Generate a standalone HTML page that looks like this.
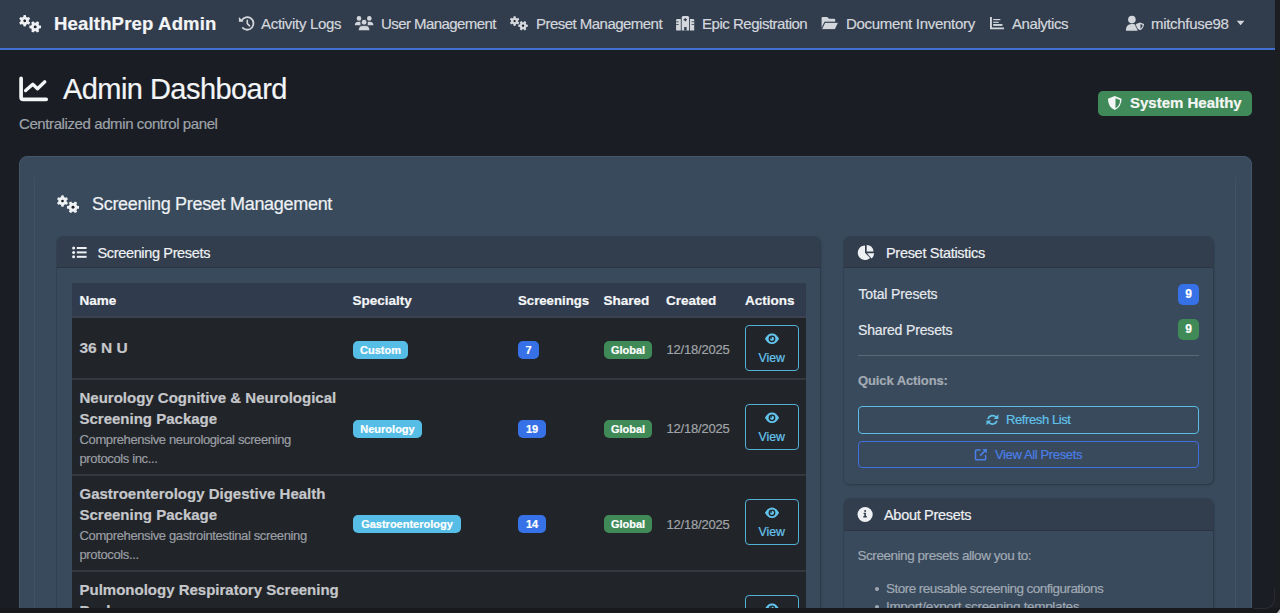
<!DOCTYPE html>
<html><head><meta charset="utf-8">
<style>
*{box-sizing:border-box;margin:0;padding:0}
html,body{width:1280px;height:613px;overflow:hidden;background:#1a1d24;font-family:"Liberation Sans",sans-serif;color:#e9ecef}
.a{position:absolute}
.t{position:absolute;white-space:nowrap;line-height:1;-webkit-text-stroke:0.2px currentColor}
.b{font-weight:700}
svg{position:absolute;display:block}
#nav{left:0;top:0;width:1275px;height:48px;background:#313c4d}
#navline{left:0;top:47.7px;width:1275px;height:2px;background:#416fd2}
#sb{left:1275px;top:0;width:5px;height:613px;background:#1c1d21}
.nl{font-size:15px;color:#d3d7dc;letter-spacing:-0.3px}
#outer{left:19px;top:156px;width:1233px;height:470px;background:#384a5c;border-radius:8px;border:1px solid #45566a}
#inner{left:34px;top:170px;width:1202px;height:460px;border-left:1.5px solid rgba(255,255,255,0.05);border-right:1.5px solid rgba(255,255,255,0.05);-webkit-mask-image:linear-gradient(to bottom,transparent 0,#000 14px)}
.card{position:absolute;background:#384a5c;border-radius:6px;box-shadow:0 0 0 1px rgba(20,25,32,0.14),1px 1px 3px rgba(0,0,0,0.18)}
.ch{position:absolute;left:0;top:0;right:0;height:31px;background:#323d4d;border-radius:6px 6px 0 0;border-bottom:1px solid #2b3441}
.bd{position:absolute;height:18px;border-radius:5px;font-weight:700;font-size:11px;color:#fff;text-align:center;line-height:18px;-webkit-text-stroke:0.2px #fff}
.cy{background:#56bde6}
.bl{background:#3771e8}
.gr{background:#3f8a57}
.row{position:absolute;left:72px;width:734px;background:#212428;border-bottom:2px solid #35373e}
.vb{position:absolute;left:745px;width:54px;height:46px;border:1px solid #52afd6;border-radius:4px}
.nm{font-size:15px;color:#c5c7cb;font-weight:700}
.ds{font-size:13px;color:#9a9ea4;letter-spacing:-0.37px}
.dt{font-size:13px;color:#a0a4a9;letter-spacing:-0.2px}
.vt{font-size:12.3px;color:#66c5ee}
</style></head><body>
<div id="nav" class="a"></div>
<div id="navline" class="a"></div>

<!-- brand -->

<div class="t b" style="left:54px;top:14.5px;font-size:18.5px;letter-spacing:0.18px;color:#f2f4f6">HealthPrep Admin</div>

<div class="t nl" style="left:261px;top:16px">Activity Logs</div>
<div class="t nl" style="left:381px;top:16px;letter-spacing:-0.57px">User Management</div>
<div class="t nl" style="left:536px;top:16px;letter-spacing:-0.53px">Preset Management</div>
<div class="t nl" style="left:702px;top:16px;letter-spacing:-0.48px">Epic Registration</div>
<div class="t nl" style="left:846px;top:16px">Document Inventory</div>
<div class="t nl" style="left:1012px;top:16px;letter-spacing:-0.43px">Analytics</div>
<div class="t nl" style="left:1151px;top:16px">mitchfuse98</div>

<div id="sb" class="a"></div>

<!-- title -->
<div class="t" style="left:63px;top:75px;font-size:29px;letter-spacing:-0.55px;color:#f3f5f7">Admin Dashboard</div>
<div class="t" style="left:19px;top:116px;font-size:15px;letter-spacing:-0.4px;color:#9ea3a9">Centralized admin control panel</div>

<div class="a" style="left:1098px;top:91px;width:154px;height:25px;background:#3f8a58;border-radius:5px"></div>
<div class="t b" style="left:1130px;top:95px;font-size:15px;color:#f4f6f5">System Healthy</div>

<div id="outer" class="a"></div>
<div id="inner" class="a"></div>

<div class="t" style="left:92px;top:195px;font-size:18px;letter-spacing:-0.3px;color:#eef1f4">Screening Preset Management</div>

<!-- left card -->
<div class="card" style="left:57px;top:237px;width:763px;height:400px">
  <div class="ch"></div>
</div>
<div class="t" style="left:97.5px;top:245.7px;font-size:14.5px;letter-spacing:-0.35px;color:#eef1f4">Screening Presets</div>

<div class="a" style="left:72px;top:283px;width:734px;height:35px;background:#303c4d;border-bottom:2px solid #3c4250"></div>
<div class="t b" style="left:79.5px;top:294px;font-size:13.5px;color:#f4f6f8">Name</div>
<div class="t b" style="left:352.5px;top:294px;font-size:13.5px;color:#f4f6f8">Specialty</div>
<div class="t b" style="left:518px;top:294px;font-size:13.2px;color:#f4f6f8">Screenings</div>
<div class="t b" style="left:603.5px;top:294px;font-size:13.5px;color:#f4f6f8">Shared</div>
<div class="t b" style="left:666px;top:294px;font-size:13.5px;color:#f4f6f8">Created</div>
<div class="t b" style="left:745px;top:294px;font-size:13.5px;color:#f4f6f8">Actions</div>

<div class="row" style="top:318px;height:62px"></div>
<div class="row" style="top:380px;height:96px"></div>
<div class="row" style="top:476px;height:96px"></div>
<div class="row" style="top:572px;height:96px"></div>

<!-- row1 -->
<div class="t nm" style="left:79.5px;top:340px;font-size:15.5px">36 N U</div>
<div class="bd cy" style="left:353px;top:341px;width:55px">Custom</div>
<div class="bd bl" style="left:518px;top:341px;width:21px">7</div>
<div class="bd gr" style="left:604px;top:341px;width:48px">Global</div>
<div class="t dt" style="left:666.5px;top:342.5px">12/18/2025</div>
<div class="vb" style="top:325px"></div>
<div class="t vt" style="left:758.5px;top:352px">View</div>

<!-- row2 -->
<div class="t nm" style="left:79.5px;top:390px">Neurology Cognitive &amp; Neurological</div>
<div class="t nm" style="left:79.5px;top:411px">Screening Package</div>
<div class="t ds" style="left:79.5px;top:433px">Comprehensive neurological screening</div>
<div class="t ds" style="left:79.5px;top:452px">protocols inc...</div>
<div class="bd cy" style="left:353px;top:419.5px;width:69px">Neurology</div>
<div class="bd bl" style="left:518px;top:419.5px;width:28px">19</div>
<div class="bd gr" style="left:604px;top:419.5px;width:48px">Global</div>
<div class="t dt" style="left:666.5px;top:422px">12/18/2025</div>
<div class="vb" style="top:404px"></div>
<div class="t vt" style="left:758.5px;top:431px">View</div>

<!-- row3 -->
<div class="t nm" style="left:79.5px;top:486px">Gastroenterology Digestive Health</div>
<div class="t nm" style="left:79.5px;top:507px">Screening Package</div>
<div class="t ds" style="left:79.5px;top:529px">Comprehensive gastrointestinal screening</div>
<div class="t ds" style="left:79.5px;top:548px">protocols...</div>
<div class="bd cy" style="left:353px;top:515px;width:108px">Gastroenterology</div>
<div class="bd bl" style="left:518px;top:515px;width:28px">14</div>
<div class="bd gr" style="left:604px;top:515px;width:48px">Global</div>
<div class="t dt" style="left:666.5px;top:518px">12/18/2025</div>
<div class="vb" style="top:499px"></div>
<div class="t vt" style="left:758.5px;top:526px">View</div>

<!-- row4 -->
<div class="t nm" style="left:79.5px;top:582px">Pulmonology Respiratory Screening</div>
<div class="t nm" style="left:79.5px;top:603px">Package</div>
<div class="vb" style="top:595px"></div>

<!-- right card -->
<div class="card" style="left:844px;top:237px;width:369px;height:247px"><div class="ch"></div></div>
<div class="t" style="left:886px;top:246px;font-size:14.5px;letter-spacing:-0.3px;color:#eef1f4">Preset Statistics</div>
<div class="t" style="left:858.5px;top:286.5px;font-size:14px;letter-spacing:-0.15px;color:#e6e9ed">Total Presets</div>
<div class="t" style="left:858px;top:322.5px;font-size:14px;letter-spacing:-0.15px;color:#e6e9ed">Shared Presets</div>
<div class="bd bl" style="left:1178px;top:283.5px;width:21px;height:21px;line-height:21px;border-radius:5px;font-size:12px">9</div>
<div class="bd gr" style="left:1178px;top:319px;width:21px;height:21px;line-height:21px;border-radius:5px;font-size:12px">9</div>
<div class="a" style="left:858px;top:355px;width:341px;height:1px;background:#5b6878"></div>
<div class="t b" style="left:858px;top:374px;font-size:13px;letter-spacing:-0.1px;color:#a3abb4">Quick Actions:</div>
<div class="a" style="left:858px;top:406px;width:341px;height:28px;border:1px solid #5bbde6;border-radius:4px"></div>
<div class="t" style="left:1006px;top:413px;font-size:13px;letter-spacing:-0.4px;color:#62c2ea">Refresh List</div>
<div class="a" style="left:858px;top:441px;width:341px;height:27px;border:1.5px solid #416fdc;border-radius:4px"></div>
<div class="t" style="left:995px;top:448px;font-size:13px;letter-spacing:-0.37px;color:#4b7ee6">View All Presets</div>

<!-- about card -->
<div class="card" style="left:844px;top:499px;width:369px;height:200px"><div class="ch" style="height:32px"></div></div>
<div class="t" style="left:884px;top:508px;font-size:14.5px;letter-spacing:-0.3px;color:#eef1f4">About Presets</div>
<div class="t" style="left:857.5px;top:548.5px;font-size:13.5px;letter-spacing:-0.45px;color:#a0a9b3">Screening presets allow you to:</div>
<div class="a" style="left:875px;top:587px;width:4px;height:4px;border-radius:50%;background:#a0a9b3"></div>
<div class="t" style="left:886px;top:582px;font-size:13.5px;letter-spacing:-0.53px;color:#a0a9b3">Store reusable screening configurations</div>
<div class="a" style="left:875px;top:605px;width:4px;height:4px;border-radius:50%;background:#a0a9b3"></div>
<div class="t" style="left:886px;top:600px;font-size:13.5px;letter-spacing:-0.33px;color:#a0a9b3">Import/export screening templates</div>

<!--ICONS--><svg class="ov" width="1280" height="613" viewBox="0 0 1280 613" style="position:absolute;left:0;top:0">
<path fill="#eef0f3" d="M23.27,16.89 L23.46,15.24 A5.70,5.70 0 0,1 25.94,15.24 L26.13,16.89 A4.16,4.16 0 0,1 27.37,17.61 L28.90,16.94 A5.70,5.70 0 0,1 30.14,19.10 L28.80,20.08 A4.16,4.16 0 0,1 28.80,21.52 L30.14,22.50 A5.70,5.70 0 0,1 28.90,24.66 L27.37,23.99 A4.16,4.16 0 0,1 26.13,24.71 L25.94,26.36 A5.70,5.70 0 0,1 23.46,26.36 L23.27,24.71 A4.16,4.16 0 0,1 22.03,23.99 L20.50,24.66 A5.70,5.70 0 0,1 19.26,22.50 L20.60,21.52 A4.16,4.16 0 0,1 20.60,20.08 L19.26,19.10 A5.70,5.70 0 0,1 20.50,16.94 L22.03,17.61 A4.16,4.16 0 0,1 23.27,16.89Z"/><circle cx="24.7" cy="20.8" r="1.37" fill="#1c1f26"/><path fill="#eef0f3" d="M35.94,22.66 L36.96,21.27 A5.90,5.90 0 0,1 39.19,22.56 L38.50,24.13 A4.31,4.31 0 0,1 39.25,25.42 L40.96,25.61 A5.90,5.90 0 0,1 40.96,28.19 L39.25,28.38 A4.31,4.31 0 0,1 38.50,29.67 L39.19,31.24 A5.90,5.90 0 0,1 36.96,32.53 L35.94,31.14 A4.31,4.31 0 0,1 34.46,31.14 L33.44,32.53 A5.90,5.90 0 0,1 31.21,31.24 L31.90,29.67 A4.31,4.31 0 0,1 31.15,28.38 L29.44,28.19 A5.90,5.90 0 0,1 29.44,25.61 L31.15,25.42 A4.31,4.31 0 0,1 31.90,24.13 L31.21,22.56 A5.90,5.90 0 0,1 33.44,21.27 L34.46,22.66 A4.31,4.31 0 0,1 35.94,22.66Z"/><circle cx="35.2" cy="26.9" r="1.42" fill="#1c1f26"/>
<path fill="#d3d7dc" d="M513.39,17.77 L513.54,16.37 A4.85,4.85 0 0,1 515.66,16.37 L515.81,17.77 A3.54,3.54 0 0,1 516.87,18.39 L518.17,17.82 A4.85,4.85 0 0,1 519.23,19.65 L518.09,20.49 A3.54,3.54 0 0,1 518.09,21.71 L519.23,22.55 A4.85,4.85 0 0,1 518.17,24.38 L516.87,23.81 A3.54,3.54 0 0,1 515.81,24.43 L515.66,25.83 A4.85,4.85 0 0,1 513.54,25.83 L513.39,24.43 A3.54,3.54 0 0,1 512.33,23.81 L511.03,24.38 A4.85,4.85 0 0,1 509.97,22.55 L511.11,21.71 A3.54,3.54 0 0,1 511.11,20.49 L509.97,19.65 A4.85,4.85 0 0,1 511.03,17.82 L512.33,18.39 A3.54,3.54 0 0,1 513.39,17.77Z"/><circle cx="514.6" cy="21.1" r="1.16" fill="#1c1f26"/><path fill="#d3d7dc" d="M523.66,22.26 L524.50,21.12 A4.85,4.85 0 0,1 526.33,22.18 L525.76,23.48 A3.54,3.54 0 0,1 526.38,24.54 L527.78,24.69 A4.85,4.85 0 0,1 527.78,26.81 L526.38,26.96 A3.54,3.54 0 0,1 525.76,28.02 L526.33,29.32 A4.85,4.85 0 0,1 524.50,30.38 L523.66,29.24 A3.54,3.54 0 0,1 522.44,29.24 L521.60,30.38 A4.85,4.85 0 0,1 519.77,29.32 L520.34,28.02 A3.54,3.54 0 0,1 519.72,26.96 L518.32,26.81 A4.85,4.85 0 0,1 518.32,24.69 L519.72,24.54 A3.54,3.54 0 0,1 520.34,23.48 L519.77,22.18 A4.85,4.85 0 0,1 521.60,21.12 L522.44,22.26 A3.54,3.54 0 0,1 523.66,22.26Z"/><circle cx="523.05" cy="25.75" r="1.16" fill="#1c1f26"/>
<path fill="#eef1f4" d="M61.07,197.09 L61.26,195.44 A5.70,5.70 0 0,1 63.74,195.44 L63.93,197.09 A4.16,4.16 0 0,1 65.17,197.81 L66.70,197.14 A5.70,5.70 0 0,1 67.94,199.30 L66.60,200.28 A4.16,4.16 0 0,1 66.60,201.72 L67.94,202.70 A5.70,5.70 0 0,1 66.70,204.86 L65.17,204.19 A4.16,4.16 0 0,1 63.93,204.91 L63.74,206.56 A5.70,5.70 0 0,1 61.26,206.56 L61.07,204.91 A4.16,4.16 0 0,1 59.83,204.19 L58.30,204.86 A5.70,5.70 0 0,1 57.06,202.70 L58.40,201.72 A4.16,4.16 0 0,1 58.40,200.28 L57.06,199.30 A5.70,5.70 0 0,1 58.30,197.14 L59.83,197.81 A4.16,4.16 0 0,1 61.07,197.09Z"/><circle cx="62.5" cy="201" r="1.37" fill="#1c1f26"/><path fill="#eef1f4" d="M73.77,202.91 L74.82,201.48 A6.10,6.10 0 0,1 77.13,202.81 L76.41,204.44 A4.45,4.45 0 0,1 77.18,205.77 L78.95,205.97 A6.10,6.10 0 0,1 78.95,208.63 L77.18,208.83 A4.45,4.45 0 0,1 76.41,210.16 L77.13,211.79 A6.10,6.10 0 0,1 74.82,213.12 L73.77,211.69 A4.45,4.45 0 0,1 72.23,211.69 L71.18,213.12 A6.10,6.10 0 0,1 68.87,211.79 L69.59,210.16 A4.45,4.45 0 0,1 68.82,208.83 L67.05,208.63 A6.10,6.10 0 0,1 67.05,205.97 L68.82,205.77 A4.45,4.45 0 0,1 69.59,204.44 L68.87,202.81 A6.10,6.10 0 0,1 71.18,201.48 L72.23,202.91 A4.45,4.45 0 0,1 73.77,202.91Z"/><circle cx="73" cy="207.3" r="1.46" fill="#1c1f26"/>
<path fill="#62c4ec" fill-rule="evenodd" d="M764.9,338.8 Q768.095,333.235 772,333.5 Q775.905,333.235 779.1,338.8 Q775.905,344.365 772,344.1 Q768.095,344.365 764.9,338.8Z M775.4,338.8 A3.4,3.4 0 1,0 768.6,338.8 A3.4,3.4 0 1,0 775.4,338.8Z"/><circle cx="772" cy="338.8" r="2.1" fill="#62c4ec"/><circle cx="771.1" cy="337.90000000000003" r="0.9" fill="#212428"/>
<path fill="#62c4ec" fill-rule="evenodd" d="M764.9,417.8 Q768.095,412.235 772,412.5 Q775.905,412.235 779.1,417.8 Q775.905,423.365 772,423.1 Q768.095,423.365 764.9,417.8Z M775.4,417.8 A3.4,3.4 0 1,0 768.6,417.8 A3.4,3.4 0 1,0 775.4,417.8Z"/><circle cx="772" cy="417.8" r="2.1" fill="#62c4ec"/><circle cx="771.1" cy="416.90000000000003" r="0.9" fill="#212428"/>
<path fill="#62c4ec" fill-rule="evenodd" d="M764.9,512.8 Q768.095,507.23499999999996 772,507.49999999999994 Q775.905,507.23499999999996 779.1,512.8 Q775.905,518.365 772,518.0999999999999 Q768.095,518.365 764.9,512.8Z M775.4,512.8 A3.4,3.4 0 1,0 768.6,512.8 A3.4,3.4 0 1,0 775.4,512.8Z"/><circle cx="772" cy="512.8" r="2.1" fill="#62c4ec"/><circle cx="771.1" cy="511.9" r="0.9" fill="#212428"/>
<path fill="#62c4ec" fill-rule="evenodd" d="M764.9,608.8 Q768.095,603.2349999999999 772,603.5 Q775.905,603.2349999999999 779.1,608.8 Q775.905,614.365 772,614.0999999999999 Q768.095,614.365 764.9,608.8Z M775.4,608.8 A3.4,3.4 0 1,0 768.6,608.8 A3.4,3.4 0 1,0 775.4,608.8Z"/><circle cx="772" cy="608.8" r="2.1" fill="#62c4ec"/><circle cx="771.1" cy="607.9" r="0.9" fill="#212428"/>


<!-- history -->
<path d="M241.7,20.35 A6.3,6.3 0 1,1 242.75,27.95" fill="none" stroke="#d3d7dc" stroke-width="1.8" stroke-linecap="round"/>
<path d="M238.9,16.9 L238.9,21.7 L243.7,21.7 Z" fill="#d3d7dc"/>
<path d="M247.3,20.2 V23.6 L249.6,25.8" fill="none" stroke="#d3d7dc" stroke-width="1.6" stroke-linecap="round"/>
<!-- users -->
<circle cx="359" cy="18.4" r="2.3" fill="#d3d7dc"/>
<circle cx="369.3" cy="18.4" r="2.3" fill="#d3d7dc"/>
<path d="M354.8,25.2 Q354.8,21.7 358.3,21.7 H360.5 V25.2 Z" fill="#d3d7dc"/>
<path d="M373.4,25.2 Q373.4,21.7 369.9,21.7 H367.7 V25.2 Z" fill="#d3d7dc"/>
<circle cx="364.1" cy="22.2" r="2.9" fill="#d3d7dc" stroke="#313c4d" stroke-width="0.9"/>
<path d="M358.4,30.7 Q358.4,25.6 362.5,25.6 H365.7 Q369.8,25.6 369.8,30.7 Z" fill="#d3d7dc" stroke="#313c4d" stroke-width="0.8"/>
<!-- hospital -->
<path d="M676.1,30.6 V20 Q676.1,19 677.1,19 H680.8 V30.6 Z" fill="#d3d7dc"/>
<path d="M681.7,30.6 V17.4 Q681.7,15.9 683.2,15.9 H687.6 Q689.1,15.9 689.1,17.4 V30.6 Z" fill="#d3d7dc"/>
<path d="M690,30.6 V19 H693.2 Q694.2,19 694.2,20 V30.6 Z" fill="#d3d7dc"/>
<rect x="676.1" y="21.4" width="2.6" height="0.8" fill="#313c4d"/>
<rect x="676.1" y="24" width="2.6" height="0.8" fill="#313c4d"/>
<rect x="691.6" y="21.4" width="2.6" height="0.8" fill="#313c4d"/>
<rect x="691.6" y="24" width="2.6" height="0.8" fill="#313c4d"/>
<path d="M684.6,18.2 H686 V19.1 H686.9 V20.3 H686 V21.2 H684.6 V20.3 H683.7 V19.1 H684.6 Z" fill="#313c4d"/>
<rect x="684.2" y="27" width="2.4" height="3.6" fill="#313c4d"/>
<!-- folder open -->
<path d="M821.6,27.8 V18 Q821.6,16.9 822.7,16.9 H827.2 L829,18.8 H834.2 Q835.2,18.8 835.2,19.8 V21.7 H824.6 Z" fill="#d3d7dc"/>
<path d="M821.5,29.5 L824.9,22.4 H838.5 L835.1,29.5 Z" fill="#d3d7dc" stroke="#313c4d" stroke-width="0.8" stroke-linejoin="round"/>
<!-- chart bars -->
<path d="M990.95,17 V28.35 H1004" fill="none" stroke="#d3d7dc" stroke-width="1.9"/>
<rect x="993.2" y="19" width="7.2" height="1.2" fill="#d3d7dc"/>
<rect x="993.2" y="21.7" width="5.5" height="1.2" fill="#d3d7dc"/>
<rect x="993.2" y="24" width="9.2" height="1.9" fill="#d3d7dc"/>
<!-- user shield -->
<circle cx="1131.9" cy="19.6" r="3.8" fill="#d3d7dc"/>
<path d="M1125.9,30.8 Q1125.9,24 1131.5,24 H1133 Q1136,24 1137.5,25.5 V30.8 Z" fill="#d3d7dc"/>
<path d="M1140,21.6 L1144.9,23.5 Q1144.8,28.6 1140,31.2 Q1135.2,28.6 1135.1,23.5 Z" fill="#313c4d"/>
<path d="M1140,22.4 L1144,23.9 Q1143.9,28.1 1140,30.3 Q1136.1,28.1 1136,23.9 Z" fill="#d3d7dc"/>
<path d="M1140.5,24.1 L1142.7,24.9 Q1142.6,27.4 1140.5,28.8 Z" fill="#313c4d"/>
<!-- caret -->
<path d="M1236.8,20.7 H1244.4 L1240.6,25.2 Z" fill="#d3d7dc"/>
<!-- title chart -->
<path d="M21.1,78.3 V97.2 Q21.1,99.3 23.2,99.3 H46.2" fill="none" stroke="#f3f5f7" stroke-width="3.7" stroke-linecap="round" stroke-linejoin="round"/>
<path d="M25.6,90.6 L32.8,84.2 L37.5,88.7 L44.8,81.8" fill="none" stroke="#f3f5f7" stroke-width="3.3" stroke-linecap="round" stroke-linejoin="round"/>
<!-- shield halved -->
<path d="M1114.75,95.9 L1121.6,98.7 Q1121.6,106.6 1114.75,110.1 Q1107.9,106.6 1107.9,98.7 Z" fill="#f4f6f5"/>
<path d="M1115.5,98.2 L1120,100 Q1120,105.6 1115.5,108.2 Z" fill="#3f8a58"/>
<!-- list -->
<circle cx="73.6" cy="248" r="1.5" fill="#eef1f4"/>
<circle cx="73.6" cy="252.4" r="1.5" fill="#eef1f4"/>
<circle cx="73.6" cy="256.8" r="1.5" fill="#eef1f4"/>
<rect x="76.8" y="247" width="9.8" height="2" fill="#eef1f4"/>
<rect x="76.8" y="251.4" width="9.8" height="2" fill="#eef1f4"/>
<rect x="76.8" y="255.8" width="9.8" height="2" fill="#eef1f4"/>
<!-- pie -->
<path d="M865,252.8 V245.4 A7.3,7.3 0 1,0 870.1,258 Z" fill="#eef1f4"/>
<path d="M866.7,251.6 V244.9 A6.8,6.8 0 0,1 873.5,251.6 Z" fill="#eef1f4"/>
<path d="M867.1,253.3 H874.1 A7.2,7.2 0 0,1 871.5,258.6 Z" fill="#eef1f4"/>
<!-- refresh -->
<path d="M987.9,418.9 A4.9,4.9 0 0,1 996.3,417.3" fill="none" stroke="#62c2ea" stroke-width="1.7"/>
<path d="M998.4,414.3 V419 H993.7 Z" fill="#62c2ea"/>
<path d="M997,420.7 A4.9,4.9 0 0,1 988.6,422.3" fill="none" stroke="#62c2ea" stroke-width="1.7"/>
<path d="M986.5,425.3 V420.6 H991.2 Z" fill="#62c2ea"/>
<!-- external -->
<path d="M980,449.9 H976.4 Q975.5,449.9 975.5,450.8 V458.9 Q975.5,459.8 976.4,459.8 H984.7 Q985.6,459.8 985.6,458.9 V455.4" fill="none" stroke="#4b7ee6" stroke-width="1.5" stroke-linecap="round"/>
<path d="M980.6,455.1 L985.6,450.1" fill="none" stroke="#4b7ee6" stroke-width="1.6" stroke-linecap="round"/>
<path d="M982.3,448.9 H986.9 V453.5 Z" fill="#4b7ee6"/>
<!-- info -->
<circle cx="865.1" cy="514.5" r="7.6" fill="#eef1f4"/>
<circle cx="865.1" cy="511" r="1" fill="#323d4d"/>
<path d="M863.6,512.8 H865.9 V516.1 H866.8 V517.4 H863.3 V516.1 H864.3 V514 H863.6 Z" fill="#323d4d"/>

</svg>
<!--/ICONS-->
<div class="a" style="left:0;top:608px;width:1280px;height:5px;background:#18191d"></div><div class="a" style="left:1254px;top:588px;width:21px;height:21px;border-bottom-right-radius:10px;border-right:1px solid #2a2b31;border-bottom:1px solid #2a2b31"></div><div class="a" style="left:1277px;top:609px;width:3px;height:4px;background:#b8b9bc;clip-path:polygon(100% 0,100% 100%,0 100%)"></div>
</body></html>
